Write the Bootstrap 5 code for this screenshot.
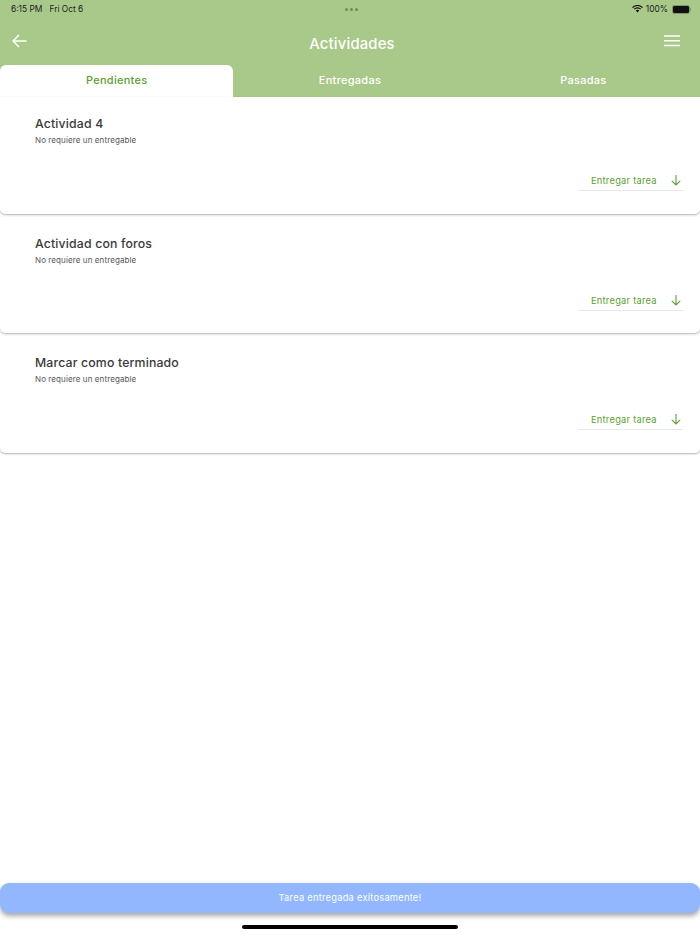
<!DOCTYPE html>
<html lang="es">
<head>
<meta charset="utf-8">
<title>Actividades</title>
<link href="https://cdn.jsdelivr.net/npm/bootstrap@5.3.0/dist/css/bootstrap.min.css" rel="stylesheet">
<style>
html,body{margin:0;height:934px;overflow:hidden;background:#fff}
body{font-family:Inter,"Liberation Sans",sans-serif;color:#2d2d2d}
.screen{width:700px;height:934px}
.hdr{background:#a9c98a;height:97px;flex:none}
.statusbar{height:17px;padding:1px 11px 0;font-size:8.4px;line-height:16px;color:#1c1c1c}
.statusbar .when{width:330px;white-space:pre}
.statusbar .dots{width:20px;gap:2px}
.statusbar .dots i{width:3px;height:3px;border-radius:50%;background:#6f8a5a;display:block}
.statusbar .right{width:328px;gap:3px}
.batt{width:16px;height:7px;background:#111;border-radius:1px;margin-left:2px;outline:1px solid #7f9a68}
.batt-tip{width:1px;height:3px;background:#7f9a68;margin-left:-2px;margin-right:-2px}
.topbar{height:48px}
.topbar .back{width:64px;padding-left:12px;padding-top:17px}
.ttl{color:#fff;font-size:14.8px;font-weight:500;padding-top:17px;padding-left:4px;letter-spacing:.2px;line-height:20px}
.topbar .burger{width:64px;padding-left:28px;padding-top:18px}
.tabsbar{height:32px}
.tabitem{width:233.33px;font-size:11px;font-weight:500;letter-spacing:.28px;color:#fff;line-height:31px;text-align:center}
.tabitem.on{background:#fff;color:#5f9e35;border-radius:6px 6px 0 0}
.task{height:116.7px;background:#fff;border-radius:0 0 5px 5px;box-shadow:0 1px 2px rgba(0,0,0,.3);margin-bottom:3px;padding:19px 17px 0 35px}
.taskname{font-size:12.3px;font-weight:500;line-height:16px;letter-spacing:.15px;color:#3a3a3a}
.tasksub{font-size:8px;line-height:12px;margin-top:2px;color:#555;letter-spacing:.1px}
.deliver{width:104px;height:24px;margin-top:21px;border-bottom:1px solid #e8e8e8;color:#5f9e35;font-size:9.3px;letter-spacing:.25px;padding:4px 2px 0 12px;line-height:19px}
.deliver svg{margin-top:4px}
.toast-bar{height:30px;width:700px;background:#92b7fe;border-radius:9px;box-shadow:0 3px 5px rgba(0,0,0,.35);color:#fff;font-size:9.3px;letter-spacing:.25px;line-height:30px;text-align:center;margin-bottom:12px;flex:none}
.homebar{width:216px;height:4px;background:#000;border-radius:2px;margin:0 auto 5px;flex:none}
</style>
</head>
<body>
<div class="screen d-flex flex-column">
  <header class="hdr">
    <div class="statusbar d-flex align-items-center">
      <div class="when">6:15 PM   Fri Oct 6</div>
      <div class="dots d-flex justify-content-center"><i></i><i></i><i></i></div>
      <div class="right d-flex justify-content-end align-items-center">
        <svg width="11" height="8" viewBox="0 0 11 8"><path d="M.5 2.6a7 7 0 0 1 10 0M2.2 4.2a4.6 4.6 0 0 1 6.6 0" fill="none" stroke="#111" stroke-width="1.2"/><path d="M3.8 5.6a2.4 2.4 0 0 1 3.4 0L5.5 7.6z" fill="#111"/></svg>
        <span>100%</span>
        <span class="batt"></span>
        <span class="batt-tip"></span>
      </div>
    </div>
    <div class="topbar d-flex">
      <div class="back"><svg width="15" height="14" viewBox="0 0 15 14" class="d-block"><path d="M14.5 7H1.2M7 1 1 7l6 6" fill="none" stroke="#fff" stroke-width="1.5"/></svg></div>
      <div class="ttl flex-grow-1 text-center">Actividades</div>
      <div class="burger"><svg width="16" height="12" viewBox="0 0 16 12" class="d-block"><path d="M0 1h16M0 5.7h16M0 10.4h16" stroke="#fff" stroke-width="1.5"/></svg></div>
    </div>
    <div class="tabsbar d-flex">
      <div class="tabitem on">Pendientes</div>
      <div class="tabitem">Entregadas</div>
      <div class="tabitem">Pasadas</div>
    </div>
  </header>
  <main class="flex-grow-1">
    <section class="task">
      <div class="taskname">Actividad 4</div>
      <div class="tasksub">No requiere un entregable</div>
      <div class="d-flex justify-content-end"><div class="deliver d-flex justify-content-between"><span>Entregar tarea</span><svg width="10" height="11" viewBox="0 0 10 11"><path d="M5 0v10M.8 5.8 5 10l4.2-4.2" fill="none" stroke="#5f9e35" stroke-width="1.1"/></svg></div></div>
    </section>
    <section class="task">
      <div class="taskname">Actividad con foros</div>
      <div class="tasksub">No requiere un entregable</div>
      <div class="d-flex justify-content-end"><div class="deliver d-flex justify-content-between"><span>Entregar tarea</span><svg width="10" height="11" viewBox="0 0 10 11"><path d="M5 0v10M.8 5.8 5 10l4.2-4.2" fill="none" stroke="#5f9e35" stroke-width="1.1"/></svg></div></div>
    </section>
    <section class="task">
      <div class="taskname">Marcar como terminado</div>
      <div class="tasksub">No requiere un entregable</div>
      <div class="d-flex justify-content-end"><div class="deliver d-flex justify-content-between"><span>Entregar tarea</span><svg width="10" height="11" viewBox="0 0 10 11"><path d="M5 0v10M.8 5.8 5 10l4.2-4.2" fill="none" stroke="#5f9e35" stroke-width="1.1"/></svg></div></div>
    </section>
  </main>
  <div class="toast-bar">Tarea entregada exitosamente!</div>
  <div class="homebar"></div>
</div>
<script src="https://cdn.jsdelivr.net/npm/bootstrap@5.3.0/dist/js/bootstrap.bundle.min.js"></script>
</body>
</html>
